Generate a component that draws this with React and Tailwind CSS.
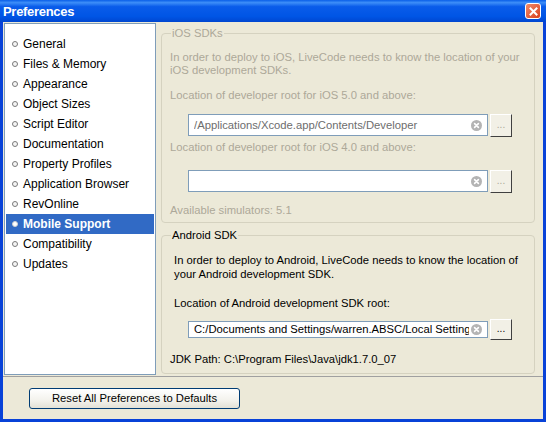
import React from "react";

// Preferences dialog, Windows XP Luna look
const items = [
  "General",
  "Files & Memory",
  "Appearance",
  "Object Sizes",
  "Script Editor",
  "Documentation",
  "Property Profiles",
  "Application Browser",
  "RevOnline",
  "Mobile Support",
  "Compatibility",
  "Updates",
];

const ClearIcon = () => (
  <svg width="11" height="11" viewBox="0 0 11 11" className="shrink-0">
    <circle cx="5.5" cy="5.5" r="5.5" fill="#B4B4B4" />
    <path d="M3.6 3.6 L7.4 7.4 M7.4 3.6 L3.6 7.4" stroke="#fff" strokeWidth="1.6" strokeLinecap="round" />
  </svg>
);

const DotsButton = ({ disabled, className }) => (
  <div
    className={
      "w-[22px] flex items-center justify-center bg-[#F2F0E6] border border-t-white border-l-white border-r-[#404040] border-b-[#404040] text-[10px] leading-none pb-[2px] " +
      (disabled ? "text-[#ACA899] " : "text-black ") +
      className
    }
  >
    ...
  </div>
);

const PathInput = ({ value, disabled, className }) => (
  <div
    className={
      "flex items-center w-[300px] bg-white border border-[#7F9DB9] pl-[5px] pr-[5px] gap-[2px] " +
      className
    }
  >
    <div className={"flex-1 overflow-hidden whitespace-nowrap " + (disabled ? "text-[#6D6D6D]" : "text-black")}>
      {value}
    </div>
    <ClearIcon />
  </div>
);

export default function App() {
  return (
    <div
      className="w-[546px] h-[422px] bg-[#0842D8] flex flex-col text-[11.25px] leading-[13px] text-black whitespace-nowrap"
      style={{ fontFamily: '"Liberation Sans", Arial, sans-serif' }}
    >
      {/* Title bar */}
      <div className="h-[22px] flex items-center justify-between pl-[3px] pr-[5px] bg-[linear-gradient(to_bottom,#0A5FE8_0%,#3D8EF8_12%,#0A5CEA_30%,#0055E5_75%,#0046D0_100%)]">
        <span className="text-white font-bold text-[13px] tracking-[-0.3px] pt-[1px]">Preferences</span>
        <div className="w-[16px] h-[16px] rounded-[3px] border border-white bg-[linear-gradient(135deg,#F08A6A,#D8401C)] flex items-center justify-center">
          <svg width="9" height="9" viewBox="0 0 9 9">
            <path d="M1.5 1.5 L7.5 7.5 M7.5 1.5 L1.5 7.5" stroke="#fff" strokeWidth="2" strokeLinecap="square" />
          </svg>
        </div>
      </div>

      {/* Body */}
      <div className="flex-1 mx-[3px] mb-[3px] bg-[#ECE9D8] flex flex-col">
        <div className="flex h-[355px] border-b border-[#A0A0A0]">
          {/* Category list */}
          <div className="ml-[1px] mt-[1px] w-[152px] h-[352px] bg-white border border-[#7F9DB9] pt-[10px] px-[1px] text-[12px]">
            {items.map((name) => {
              const selected = name === "Mobile Support";
              return (
                <div
                  key={name}
                  className={
                    "h-[20px] flex items-center gap-[5px] pl-[6px] " +
                    (selected ? "bg-[#316AC5] text-white font-bold" : "")
                  }
                >
                  <span
                    className={
                      "w-[6px] h-[6px] rounded-full border " +
                      (selected ? "border-[#D0D0D0] bg-white" : "border-[#7A7A7A] bg-[#F4F4F4]")
                    }
                  />
                  <span>{name}</span>
                </div>
              );
            })}
          </div>

          {/* Settings */}
          <div className="ml-[5px] w-[374px]">
            <fieldset className="mt-[5px] h-[196px] min-w-0 border border-[#D5D2C0] rounded-[4px] pl-[8px] pr-[6px] text-[#ACA899]">
              <legend className="px-[1px] ml-[1px]">iOS SDKs</legend>
              <p className="mt-[11px]">
                In order to deploy to iOS, LiveCode needs to know the location of your
                <br />
                iOS development SDKs.
              </p>
              <p className="mt-[12px]">Location of developer root for iOS 5.0 and above:</p>
              <div className="flex gap-[2px] ml-[18px] mt-[12px] h-[23px]">
                <PathInput value="/Applications/Xcode.app/Contents/Developer" disabled className="h-[22px]" />
                <DotsButton disabled />
              </div>
              <p className="mt-[4px]">Location of developer root for iOS 4.0 and above:</p>
              <div className="flex gap-[2px] ml-[18px] mt-[16px] h-[23px]">
                <PathInput value="" disabled className="h-[22px]" />
                <DotsButton disabled />
              </div>
              <p className="mt-[11px]">Available simulators: 5.1</p>
            </fieldset>

            <fieldset className="mt-[6px] h-[145px] min-w-0 border border-[#D5D2C0] rounded-[4px] pl-[8px] pr-[6px]">
              <legend className="px-[1px] ml-[1px]">Android SDK</legend>
              <p className="mt-[11px] ml-[4px] leading-[14px]">
                In order to deploy to Android, LiveCode needs to know the location of
                <br />
                your Android development SDK.
              </p>
              <p className="mt-[16px] ml-[4px]">Location of Android development SDK root:</p>
              <div className="flex gap-[2px] ml-[18px] mt-[9px] h-[21px] items-center">
                <PathInput
                  value="C:/Documents and Settings/warren.ABSC/Local Settings/Application Data"
                  className="h-[17px]"
                />
                <DotsButton className="h-[21px]" />
              </div>
              <p className="mt-[13px]">JDK Path: C:\Program Files\Java\jdk1.7.0_07</p>
            </fieldset>
          </div>
        </div>

        {/* Footer */}
        <div className="flex-1 flex items-start pt-[11px] pl-[26px]">
          <button className="w-[211px] h-[21px] rounded-[3px] border border-[#003C74] bg-[linear-gradient(to_bottom,#FFFFFF,#F3F2EC_60%,#E3E1D6)] text-[11.25px] text-black">
            Reset All Preferences to Defaults
          </button>
        </div>
      </div>
    </div>
  );
}
